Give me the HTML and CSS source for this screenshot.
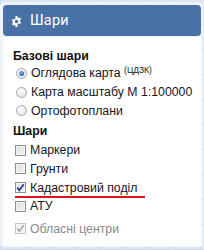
FILE: index.html
```html
<!DOCTYPE html>
<html lang="uk">
<head>
<meta charset="utf-8">
<link rel="stylesheet" href="styles.css">
</head>
<body>
<div class="map">
  <div class="panel">
    <div class="header">
      <svg class="gear" width="11" height="11" viewBox="0 0 16 16">
        <path fill="#fff" d="M6.6 0h2.8l.4 2.2a6 6 0 0 1 1.5.8l2.1-.8 1.4 2.4-1.7 1.5a6 6 0 0 1 0 1.8l1.7 1.5-1.4 2.4-2.1-.8a6 6 0 0 1-1.5.8L9.4 16H6.6l-.4-2.2a6 6 0 0 1-1.5-.8l-2.1.8-1.4-2.4 1.7-1.5a6 6 0 0 1 0-1.8L1.2 6.6l1.4-2.4 2.1.8a6 6 0 0 1 1.5-.8zM8 5.4a2.6 2.6 0 1 0 0 5.2 2.6 2.6 0 0 0 0-5.2z"/>
      </svg>
      <span class="title">Шари</span>
    </div>
    <div class="content">
      <div class="section-title">Базові шари</div>
      <div class="row radio-row"><span class="radio checked"></span><span class="label">Оглядова карта <sup>(ЦДЗК)</sup></span></div>
      <div class="row radio-row"><span class="radio"></span><span class="label">Карта масштабу М 1:100000</span></div>
      <div class="row radio-row"><span class="radio"></span><span class="label">Ортофотоплани</span></div>
      <div class="section-title second">Шари</div>
      <div class="row check-row"><span class="check"></span><span class="label">Маркери</span></div>
      <div class="row check-row"><span class="check"></span><span class="label">Грунти</span></div>
      <div class="row check-row marked"><span class="check checked"><svg width="11" height="11" viewBox="0 0 11 11"><path d="M2.2 5.6 4.3 8.2 8.8 2.2" fill="none" stroke="#2a3f9a" stroke-width="1.8"/></svg></span><span class="label">Кадастровий поділ</span></div>
      <div class="row check-row"><span class="check"></span><span class="label">АТУ</span></div>
      <div class="row check-row disabled"><span class="check checked off"><svg width="11" height="11" viewBox="0 0 11 11"><path d="M2.2 5.6 4.3 8.2 8.8 2.2" fill="none" stroke="#a8a8a8" stroke-width="1.6"/></svg></span><span class="label">Обласні центри</span></div>
    </div>
  </div>
</div>
</body>
</html>
```
FILE: styles.css
```css
html, body {
  margin: 0;
  padding: 0;
}
body {
  width: 204px;
  height: 250px;
  overflow: hidden;
  font-family: Arial, "Liberation Sans", sans-serif;
}
.map {
  width: 204px;
  height: 250px;
  background-color: #dde8f4;
  background-image:
    linear-gradient(90deg, rgba(190,210,235,.6) 1px, transparent 1px),
    linear-gradient(0deg, rgba(190,210,235,.6) 1px, transparent 1px);
  background-size: 25px 25px;
  padding-top: 2px;
  box-sizing: border-box;
}
.panel {
  width: 203px;
  height: 245px;
  box-sizing: border-box;
  padding: 3px 2px 1px 3px;
  background: #eef3f9;
  border-radius: 4px;
  display: flex;
  flex-direction: column;
}
.header {
  height: 31px;
  flex: none;
  background: #4a71a6;
  border-radius: 4px;
  display: flex;
  align-items: center;
  padding-left: 8px;
  gap: 8px;
  color: #fff;
}
.gear {
  display: block;
  margin-top: 1px;
}
.title {
  font-family: Roboto, "Liberation Sans", sans-serif;
  font-size: 14.5px;
  letter-spacing: 0.2px;
}
.content {
  flex: 1;
  background: #fff;
  margin-top: 1px;
  padding: 11px 0 0 10px;
  font-size: 12.3px;
  color: #111;
}
.section-title {
  font-weight: bold;
  height: 16px;
  line-height: 16px;
  margin-bottom: 0;
}
.section-title.second {
  margin-top: 3px;
  margin-bottom: 2px;
}
.row {
  display: flex;
  align-items: center;
  height: 18.7px;
  gap: 4px;
}
.radio-row {
  padding-left: 3px;
}
.check-row {
  padding-left: 2px;
  height: 18.6px;
}
.label {
  white-space: nowrap;
  color: #161628;
}
sup {
  font-size: 8.5px;
  vertical-align: 0;
  position: relative;
  top: -4px;
}
.radio {
  width: 9px;
  height: 9px;
  flex: none;
  border-radius: 50%;
  border: 1px solid #a4a9b0;
  background: radial-gradient(circle at 40% 35%, #fdfdfd 0, #e3e5e8 80%);
  display: flex;
  align-items: center;
  justify-content: center;
}
.radio.checked::after {
  content: "";
  width: 5px;
  height: 5px;
  border-radius: 50%;
  background: radial-gradient(circle at 35% 35%, #7fb0e8 0, #1d5fb0 80%);
}
.check {
  width: 11px;
  height: 11px;
  flex: none;
  box-sizing: border-box;
  border: 1px solid #8e8f8f;
  background: linear-gradient(135deg, #dcdcdc 0, #f4f4f4 100%);
  box-shadow: inset 0 0 0 1px #f6f6f6;
  position: relative;
}
.check svg {
  position: absolute;
  left: -1px;
  top: -1px;
}
.check.off {
  border-color: #c6c6c6;
  background: #f2f2f2;
}
.marked {
  position: relative;
}
.marked::after {
  content: "";
  position: absolute;
  left: 2px;
  width: 130px;
  bottom: -1px;
  height: 2px;
  background: #e0141e;
}
.disabled {
  margin-top: 4px;
}
.disabled .label {
  color: #8a8a8a;
}
```
